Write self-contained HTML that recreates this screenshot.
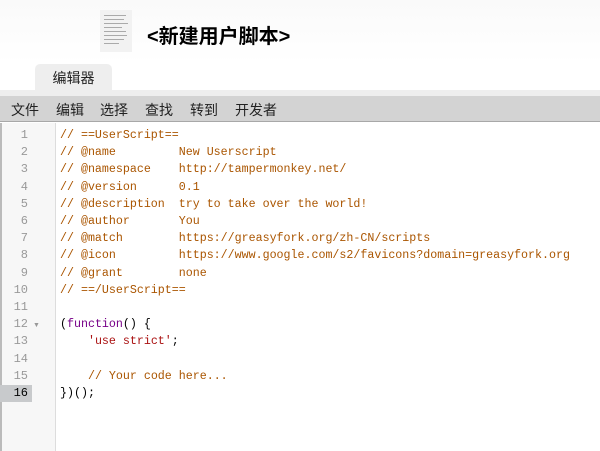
<!DOCTYPE html>
<html><head><meta charset="utf-8"><style>
*{margin:0;padding:0;box-sizing:border-box}
body{width:600px;height:451px;overflow:hidden;background:#fff;font-family:"Liberation Sans","Noto Sans CJK SC",sans-serif;position:relative}
.hdr{position:absolute;left:0;top:0;width:600px;height:64px;background:linear-gradient(#fafafa,#fff)}
.icon{position:absolute;left:100px;top:10px;width:32px;height:42px;background:#f2f2f2}
.icon i{position:absolute;left:4px;height:1px;background:#aaa}
.title{position:absolute;left:147px;top:20px;font-size:20px;font-weight:bold;color:#000}
.tab{position:absolute;left:35px;top:64px;width:77px;height:27px;background:#eee;border-radius:5px 5px 0 0;font-size:14px;text-align:center;line-height:28px;color:#222}
.strip{position:absolute;left:0;top:90px;width:600px;height:6px;background:#eee}
.menu{position:absolute;left:0;top:96px;width:600px;height:26px;background:#d3d3d3;border-bottom:1px solid #a8a8a8;font-size:14px;color:#222}
.menu span{position:absolute;top:4px}
.gut{position:absolute;left:0;top:123px;width:56px;height:328px;background:#f7f7f7;border-left:2px solid #bbb;border-right:1px solid #ddd}
.ln{position:absolute;left:0;width:30px;text-align:right;padding-right:4px;font-family:"Liberation Mono",monospace;font-size:12px;color:#999;height:17.2px;line-height:17.2px}
.code{position:absolute;left:60px;top:127px;font-family:"Liberation Mono","Noto Sans CJK SC",monospace;font-size:11.65px;line-height:17.2px;white-space:pre;color:#000}
.c{color:#a50}.k{color:#708}.s{color:#a11}
</style></head><body>
<div class="hdr"></div>
<div class="icon"><i style="top:5px;width:22px"></i><i style="top:9px;width:20px"></i><i style="top:13px;width:24px"></i><i style="top:17px;width:18px"></i><i style="top:21px;width:22px"></i><i style="top:25px;width:23px"></i><i style="top:29px;width:20px"></i><i style="top:33px;width:15px"></i></div>
<div class="title">&lt;新建用户脚本&gt;</div>
<div class="tab">编辑器</div>
<div class="strip"></div>
<div class="menu"><span style="left:11px">文件</span><span style="left:56px">编辑</span><span style="left:100px">选择</span><span style="left:145px">查找</span><span style="left:190px">转到</span><span style="left:235px">开发者</span></div>
<div class="gut">
<div class="ln" style="top:4px">1</div><div class="ln" style="top:21.2px">2</div><div class="ln" style="top:38.4px">3</div><div class="ln" style="top:55.6px">4</div><div class="ln" style="top:72.8px">5</div><div class="ln" style="top:90px">6</div><div class="ln" style="top:107.2px">7</div><div class="ln" style="top:124.4px">8</div><div class="ln" style="top:141.6px">9</div><div class="ln" style="top:158.8px">10</div><div class="ln" style="top:176px">11</div><div class="ln" style="top:193.2px">12</div><span style="position:absolute;left:31px;top:199px;font-size:7px;color:#999">▼</span><div class="ln" style="top:210.4px">13</div><div class="ln" style="top:227.6px">14</div><div class="ln" style="top:244.8px">15</div><div class="ln" style="top:262px;background:#c8cacc;color:#000;left:-2px;width:32px">16</div>
</div>
<div class="code"><span class="c">// ==UserScript==
// @name         New Userscript
// @namespace    http://tampermonkey.net/
// @version      0.1
// @description  try to take over the world!
// @author       You
// @match        https://greasyfork.org/zh-CN/scripts
// @icon         https://www.google.com/s2/favicons?domain=greasyfork.org
// @grant        none
// ==/UserScript==</span>

(<span class="k">function</span>() {
    <span class="s">'use strict'</span>;

    <span class="c">// Your code here...</span>
})();</div>
</body></html>
